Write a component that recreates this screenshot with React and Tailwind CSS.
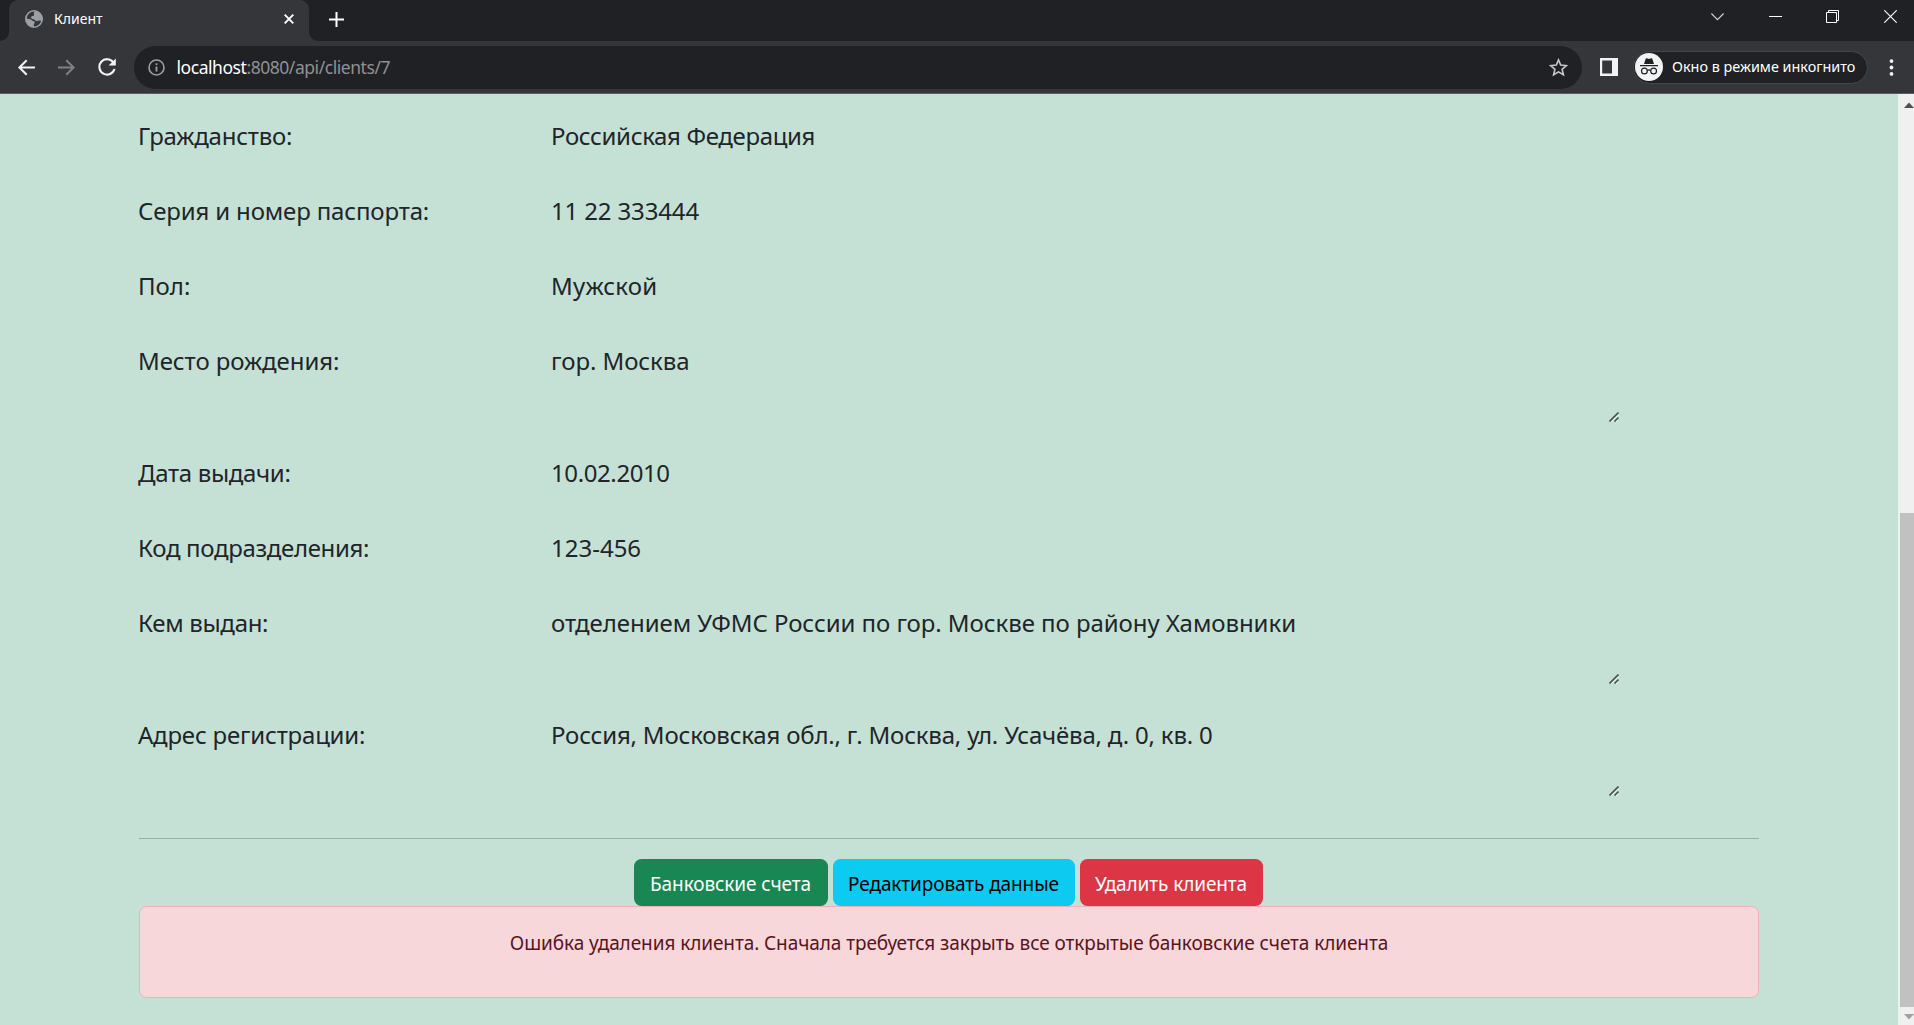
import React from "react";

const uiFont = "font-['Noto_Sans','Open_Sans',sans-serif]";

const fields = [
  { label: "Гражданство:", lt: "tracking-[-0.24px]", value: "Российская Федерация", vt: "tracking-[-0.35px]" },
  { label: "Серия и номер паспорта:", lt: "tracking-[-0.15px]", value: "11 22 333444", vt: "tracking-[-0.15px]" },
  { label: "Пол:", lt: "", value: "Мужской", vt: "tracking-[0.2px]" },
  { label: "Место рождения:", lt: "tracking-[-0.08px]", value: "гор. Москва", vt: "tracking-[-0.07px]", area: true },
  { label: "Дата выдачи:", lt: "tracking-[-0.33px]", value: "10.02.2010", vt: "tracking-[-0.4px]" },
  { label: "Код подразделения:", lt: "tracking-[-0.33px]", value: "123-456", vt: "" },
  { label: "Кем выдан:", lt: "tracking-[-0.3px]", value: "отделением УФМС России по гор. Москве по району Хамовники", vt: "tracking-[-0.06px]", area: true },
  { label: "Адрес регистрации:", lt: "tracking-[-0.2px]", value: "Россия, Московская обл., г. Москва, ул. Усачёва, д. 0, кв. 0", vt: "tracking-[-0.19px]", area: true },
];

function Globe() {
  return (
    <svg className="size-[18px]" viewBox="0 0 18 18">
      <circle cx="9" cy="9" r="8.200" fill="#35363a" stroke="#9aa0a6" strokeWidth="1.600" />
      <path
        d="M9.800.900C14 1 17.300 4.600 17.300 9c0 .9-.1 1.600-.3 2.300-.8-.5-1.700-.9-2.800-.8-1.200.1-1.900.8-3 .6-1-.2-1.100-1.200-2.100-1.600C8 9.100 6.900 9 6.300 8.200c-.6-.9.100-1.900 1.100-2.200.9-.3 1.500-.2 1.700-1 .2-.7-.4-1.200-.3-2 .1-.9.900-1.200 1-2.100z"
        fill="#9aa0a6"
      />
      <path
        d="M.9 9c1.500-.6 3.500-.4 5 .5.900.6 1.300 1.300 2.300 1.600.8.200 1.500.4 1.600 1.200.1.900-.7 1.200-.9 2-.2.900.1 1.600-.1 2.700C4.500 17 .9 13.600.9 9z"
        fill="#9aa0a6"
      />
    </svg>
  );
}

function TabStrip() {
  return (
    <div className="flex h-[41px] bg-[#202124] text-white">
      <div className="w-[9px] bg-[#35363a]">
        <div className="h-full rounded-br-[9px] bg-[#202124]" />
      </div>
      <div className="flex w-[300px] items-start rounded-t-[9px] bg-[#35363a] pl-4 pr-[15px]">
        <div className="mt-[10px]"><Globe /></div>
        <span className="ml-[11px] flex-1 text-[14px] leading-[37px]">Клиент</span>
        <svg className="mt-[14px] size-[10px]" viewBox="0 0 10 10" stroke="#fff" strokeWidth="1.9">
          <path d="M.7.7l8.600 8.600M9.300.7L.7 9.300" />
        </svg>
      </div>
      <div className="flex flex-1 items-start bg-[#35363a]">
        <div className="flex h-full flex-1 items-start rounded-bl-[9px] bg-[#202124] pl-5">
          <svg className="mt-[12px] size-[15px]" viewBox="0 0 15 15" stroke="#fff" strokeWidth="2">
            <path d="M7.500 0v15M0 7.500h15" />
          </svg>
          <div className="ml-auto mr-[17px] mt-[10px] flex gap-[44px]">
            <svg className="mr-px size-[13px]" viewBox="0 0 13 13" fill="none" stroke="#d5d6d8" strokeWidth="1.100"><path d="M.4 3.500l6.100 6.100 6.100-6.100" /></svg>
            <svg className="size-[13px]" viewBox="0 0 13 13"><path d="M0 6h13v1H0z" fill="#fff" /></svg>
            <svg className="mr-px size-[13px]" viewBox="0 0 13 13" fill="none" stroke="#fff"><path d="M.5 2.500h10v10H.5zM2.500 2.500v-2h10v10h-2" /></svg>
            <svg className="size-[13px]" viewBox="0 0 13 13" stroke="#fff" strokeWidth="1.100"><path d="M.3.3l12.400 12.400M12.700.3L.3 12.700" /></svg>
          </div>
        </div>
      </div>
    </div>
  );
}

function Arrow({ flip, color }) {
  return (
    <svg className={flip ? "size-[17px] -scale-x-100" : "size-[17px]"} viewBox="0 0 17 17" fill="none" stroke={color} strokeWidth="2">
      <path d="M17 8.500H1.700M8.700 1.200L1.400 8.500l7.300 7.300" />
    </svg>
  );
}

function Incognito() {
  return (
    <svg className="size-7" viewBox="0 0 28 28">
      <circle cx="14" cy="14" r="14" fill="#f1f3f4" />
      <path d="M10.600 5.900c.2-.6.700-.8 1.200-.6l2.200.7 2.200-.7c.5-.2 1 0 1.200.6l1.600 5.100H9zM5 12h18v1.300H5z" fill="#202124" />
      <g fill="none" stroke="#202124" strokeWidth="1.200">
        <circle cx="9.400" cy="18" r="2.900" />
        <circle cx="18.600" cy="18" r="2.900" />
        <path d="M12.300 17.600c1-.8 2.400-.8 3.400 0" />
      </g>
    </svg>
  );
}

function Toolbar() {
  return (
    <div className="flex h-[53px] items-center border-b border-[#5c5d60] bg-[#35363a] pl-[18px] text-white">
      <Arrow color="#f1f3f4" />
      <div className="ml-[23px]"><Arrow flip color="#7f8185" /></div>
      <svg className="ml-[23px] size-[18px]" viewBox="0 0 18 18" fill="none" stroke="#f1f3f4" strokeWidth="2.100">
        <path d="M15.300 4.300A7.700 7.700 0 1 0 16.500 11" />
        <path d="M17.800.4v7.200h-7.200z" fill="#f1f3f4" stroke="none" />
      </svg>
      <div className="ml-[18px] flex h-[43px] w-[1448px] items-center rounded-full bg-[#202124] pl-[14px] pr-[14px]">
        <svg className="size-[17px]" viewBox="0 0 17 17">
          <circle cx="8.500" cy="8.500" r="7.500" fill="none" stroke="#9aa0a6" strokeWidth="1.600" />
          <path d="M7.600 7.500h1.800v5H7.600zM7.600 4.300h1.800v1.800H7.600z" fill="#9aa0a6" />
        </svg>
        <span className="ml-[11.500px] text-[17.5px] leading-6 tracking-[-0.45px] text-white">
          localhost<span className="text-[#8f9195]">:8080/api/clients/7</span>
        </span>
        <svg className="ml-auto size-[19px]" viewBox="0 0 19 19" fill="none" stroke="#c4c7ca" strokeWidth="1.600">
          <path d="M9.500 1.900l2.200 5.200 5.700.5-4.300 3.700 1.300 5.500-4.900-2.900-4.900 2.900 1.300-5.500-4.300-3.700 5.700-.5z" />
        </svg>
      </div>
      <svg className="ml-[18px] size-[18px]" viewBox="0 0 18 18">
        <path d="M0 0h18v18H0zM2.200 2.500v13H12v-13z" fill="#f1f3f4" fillRule="evenodd" />
      </svg>
      <div className="ml-[15px] flex h-[33px] w-[235px] items-center rounded-full border border-[#45464a] bg-[#202124] pl-px">
        <Incognito />
        <span className="ml-[9px] whitespace-nowrap text-[14.4px] leading-5">Окно в режиме инкогнито</span>
      </div>
      <svg className="ml-[21px] h-[17px] w-[5px]" viewBox="0 0 5 17" fill="#f1f3f4">
        <circle cx="2.500" cy="2.100" r="1.900" />
        <circle cx="2.500" cy="8.500" r="1.900" />
        <circle cx="2.500" cy="14.900" r="1.900" />
      </svg>
    </div>
  );
}

function ResizeGrip() {
  return (
    <svg className="mt-[89px] size-[10px]" viewBox="0 0 10 10" fill="none">
      <path d="M2 9.500L9.500 2M7 9.500L9.500 7" stroke="#f3faf6" strokeWidth="1.200" />
      <path d="M.5 9.500l9-9M5.500 9.500l4-4" stroke="#47534e" strokeWidth="1.600" />
    </svg>
  );
}

function FieldRow({ field }) {
  return (
    <div className={field.area ? "flex h-[112px] items-start" : "flex h-[75px] items-start"}>
      <div className={`w-[413px] ${field.lt}`}>{field.label}</div>
      <div className={`w-[1058px] ${field.vt}`}>{field.value}</div>
      {field.area && <ResizeGrip />}
    </div>
  );
}

function Scrollbar() {
  return (
    <div className="flex w-4 flex-col overflow-hidden bg-[#f0f0f0] pl-0.5">
      <svg className="ml-1 mt-2 h-[6px] w-[10px] shrink-0" viewBox="0 0 10 6"><path d="M0 6l5-5.500L10 6z" fill="#505050" /></svg>
      <div className="mt-[405px] h-[494px] bg-[#c1c1c1]" />
      <svg className="ml-1 mt-[7px] h-[6px] w-[10px] shrink-0" viewBox="0 0 10 6"><path d="M0 0h10L5 5.500z" fill="#a0a0a0" /></svg>
    </div>
  );
}

export default function App() {
  return (
    <div className={`flex h-[1025px] w-[1914px] flex-col overflow-hidden ${uiFont}`}>
      <TabStrip />
      <Toolbar />
      <div className="flex min-h-0 flex-1 bg-[#c5e1d5]">
        <main className="flex-1 pt-1">
          <div className="pl-[138px] text-[24px] leading-[75px] text-[#212529]">
            {fields.map((f) => <FieldRow key={f.label} field={f} />)}
          </div>
          <div className="ml-[139px] w-[1620px]">
            <div className="mt-[29px] h-px bg-[#97afa5]" />
            <div className="-ml-px mt-5 flex justify-center gap-[5px] pr-px text-center text-[19px] leading-[51px] tracking-[-0.1px]">
              <button className="h-[47px] w-[194px] overflow-hidden rounded-[7.500px] bg-[#198754] text-white">Банковские счета</button>
              <button className="h-[47px] w-[242px] overflow-hidden rounded-[7.500px] bg-[#0dcaf0] text-black">Редактировать данные</button>
              <button className="h-[47px] w-[183px] overflow-hidden rounded-[7.500px] bg-[#dc3545] text-white">Удалить клиента</button>
            </div>
            <div className="h-[92px] rounded-[7.500px] border border-[#ebb3b8] bg-[#f8d7da] pt-[21px] text-center text-[19px] leading-[30px] tracking-[-0.08px] text-[#58151c]">
              Ошибка удаления клиента. Сначала требуется закрыть все открытые банковские счета клиента
            </div>
          </div>
        </main>
        <Scrollbar />
      </div>
    </div>
  );
}
